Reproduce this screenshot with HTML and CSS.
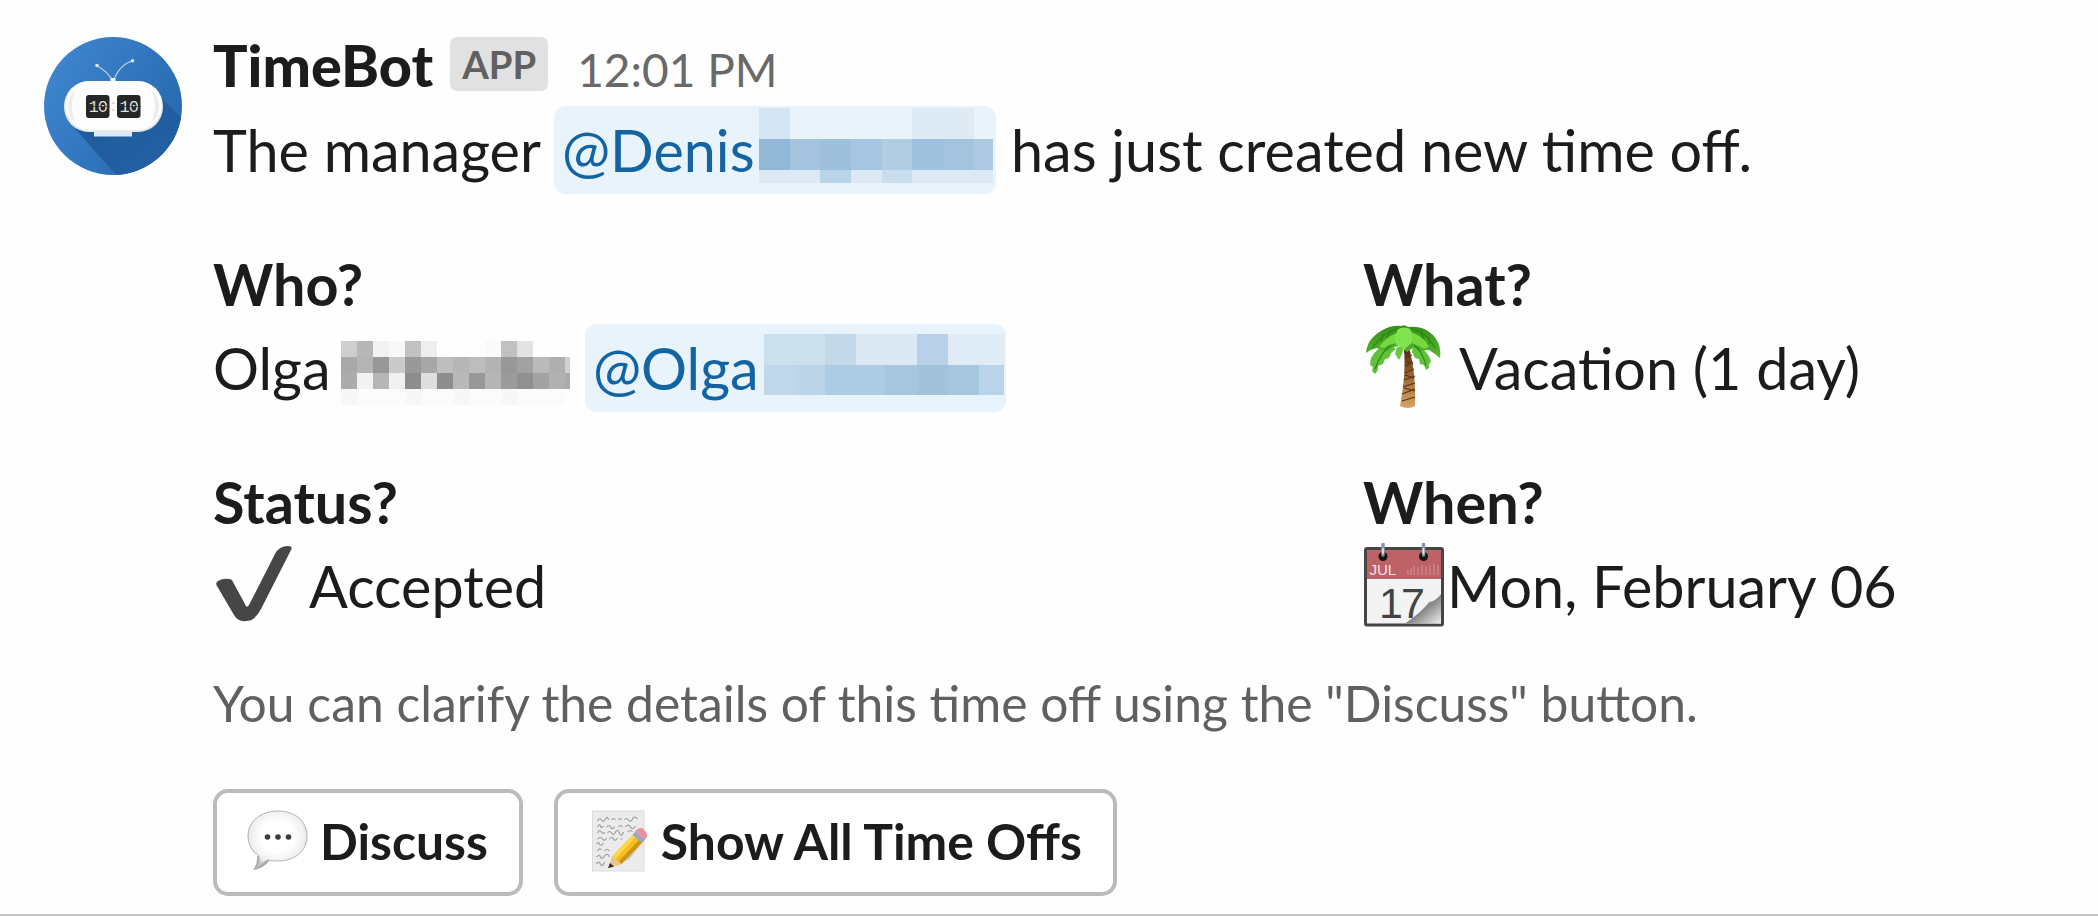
FILE: index.html
```html
<!DOCTYPE html>
<html lang="en">
<head>
  <meta charset="UTF-8" />
  <meta name="viewport" content="width=device-width, initial-scale=1.0"/>
  <title>TimeBot</title>
  <link rel="stylesheet" href="styles.css">
</head>
<body>
  <div class="message">
    <svg class="avatar" viewBox="0 0 138 138">
      <defs>
        <linearGradient id="sky" x1="0" y1="0.2" x2="1" y2="0.8">
          <stop offset="0" stop-color="#3f86d0"/>
          <stop offset="1" stop-color="#2467ac"/>
        </linearGradient>
        <linearGradient id="shade" x1="0" y1="0" x2="1" y2="1">
          <stop offset="0" stop-color="#1f5798"/>
          <stop offset="1" stop-color="#2363a6"/>
        </linearGradient>
        <clipPath id="disc"><circle cx="69" cy="69" r="69"/></clipPath>
      </defs>
      <circle cx="69" cy="69" r="69" fill="url(#sky)"/>
      <path d="M28 88L72 138H138V82L112 55Z" fill="url(#shade)" clip-path="url(#disc)"/>
      <path d="M53 29Q64 34 69 45Q75 28 88 24" fill="none" stroke="#b9d3ee" stroke-width="1.3"/>
      <circle cx="53" cy="28.500" r="1.800" fill="#dce9f6"/>
      <circle cx="88.500" cy="23.700" r="1.800" fill="#dce9f6"/>
      <rect x="66.500" y="41" width="5" height="4" fill="#eef3f8"/>
      <rect x="50" y="94" width="38" height="5.500" fill="#dfe9f5"/>
      <rect x="20" y="44" width="99" height="51" rx="25" fill="#e6e8eb"/>
      <rect x="21.500" y="44" width="96" height="49" rx="24" fill="#fdfdfd"/>
      <path d="M32 52Q24 60 24 69Q24 79 32 86Q28 78 28 69Q28 60 32 52ZM107 52Q115 60 115 69Q115 79 107 86Q111 78 111 69Q111 60 107 52Z" fill="#ececee"/>
      <rect x="42" y="58" width="23.500" height="23" rx="3" fill="#262626"/>
      <rect x="73" y="58" width="23.500" height="23" rx="3" fill="#262626"/>
      <text class="digits" x="53.800" y="75">10</text>
      <text class="digits" x="84.800" y="75">10</text>
      <path d="M42 69.500H65.500M73 69.500H96.500" stroke="#262626" stroke-width=".7"/>
      <path d="M68 66h2.500M68 73h2.500" stroke="#d8d8d8" stroke-width="2"/>
    </svg>

    <div class="content">
      <div class="header">
        <span class="name">TimeBot</span>
        <span class="badge">APP</span>
        <span class="time">12:01 PM</span>
      </div>

      <div class="line">
        <span class="intro">The manager</span>
        <span class="mention mention-denis"><span class="handle">@Denis</span>
          <svg class="redacted" width="234" height="75" viewBox="0 0 234 75" shape-rendering="crispEdges">
            <rect x="0" y="0" width="31" height="31" fill="#d5e5f1"/>
            <rect x="153" y="0" width="62" height="31" fill="#deebf5"/>
            <rect x="0" y="31" width="31" height="31" fill="#92b7d7"/>
            <rect x="31" y="31" width="61" height="31" fill="#a3c3df"/>
            <rect x="61" y="31" width="31" height="31" fill="#9fc0dc"/>
            <rect x="92" y="31" width="31" height="31" fill="#a6c5e0"/>
            <rect x="123" y="31" width="30" height="31" fill="#b1cde4"/>
            <rect x="153" y="31" width="31" height="31" fill="#9fc1dd"/>
            <rect x="184" y="31" width="31" height="31" fill="#a4c3de"/>
            <rect x="215" y="31" width="19" height="31" fill="#adcae2"/>
            <rect x="0" y="62" width="234" height="13" fill="#dce9f4"/>
            <rect x="61" y="62" width="31" height="13" fill="#b9d3e9"/>
            <rect x="123" y="62" width="30" height="13" fill="#c8dded"/>
          </svg>
        </span>
        <span class="outro">has just created new time off.</span>
      </div>

      <div class="fields">
        <div class="field">
          <div class="label">Who?</div>
          <div class="line">
            <span class="first-name">Olga</span>
            <svg class="redacted-name" width="229" height="64" viewBox="0 0 229 64" shape-rendering="crispEdges">
              <path d="M0 0h16v16H0z" fill="#cecece"/><path d="M16 0h16v16H16z" fill="#b7b7b7"/>
              <path d="M32 0h16v16H32z" fill="#f2f2f2"/><path d="M48 0h16v16H48z" fill="#f8f8f8"/>
              <path d="M64 0h16v16H64z" fill="#c2c2c2"/><path d="M80 0h16v16H80z" fill="#eee"/>
              <path d="M144 0h16v16h-16z" fill="#fafafa"/><path d="M160 0h16v16h-16z" fill="#c1c1c1"/>
              <path d="M176 0h16v16h-16z" fill="#e3e3e3"/>
              <path d="M0 16h16v16H0z" fill="#a9a9a9"/><path d="M16 16h16v16H16z" fill="#b5b5b5"/>
              <path d="M32 16h16v16H32z" fill="#989898"/><path d="M48 16h16v16H48z" fill="#cacaca"/>
              <path d="M64 16h16v16H64z" fill="#999"/><path d="M80 16h16v16H80z" fill="#a7a7a7"/>
              <path d="M96 16h16v16H96z" fill="#bebebe"/><path d="M112 16h16v16h-16z" fill="#b6b6b6"/>
              <path d="M128 16h16v16h-16z" fill="#bdbdbd"/><path d="M144 16h16v16h-16z" fill="#b3b3b3"/>
              <path d="M160 16h16v16h-16z" fill="#989898"/><path d="M176 16h16v16h-16z" fill="#a1a1a1"/>
              <path d="M192 16h16v16h-16z" fill="#bababa"/><path d="M208 16h16v16h-16z" fill="#afafaf"/>
              <path d="M224 16h5v16h-5z" fill="#d0d0d0"/>
              <path d="M0 32h16v16H0z" fill="#acacac"/><path d="M16 32h16v16H16z" fill="#f2f2f2"/>
              <path d="M32 32h16v16H32z" fill="#b6b6b6"/><path d="M48 32h16v16H48z" fill="#f1f1f1"/>
              <path d="M64 32h16v16H64z" fill="#8d8d8d"/><path d="M80 32h16v16H80z" fill="#dedede"/>
              <path d="M96 32h16v16H96z" fill="#8e8e8e"/><path d="M112 32h16v16h-16z" fill="#b9b9b9"/>
              <path d="M128 32h16v16h-16z" fill="#989898"/><path d="M144 32h16v16h-16z" fill="#b5b5b5"/>
              <path d="M160 32h16v16h-16z" fill="#9b9b9b"/><path d="M176 32h16v16h-16z" fill="#909090"/>
              <path d="M192 32h16v16h-16z" fill="#a2a2a2"/><path d="M208 32h16v16h-16z" fill="#b1b1b1"/>
              <path d="M224 32h5v16h-5z" fill="#aaa"/>
              <path d="M0 48h16v16H0zM64 48h16v16H64zM112 48h16v16h-16zM160 48h16v16h-16z" fill="#f7f7f7"/>
              <path d="M16 48h48v16H16zM80 48h32v16H80zM128 48h32v16h-32zM176 48h48v16h-48z" fill="#fbfbfb"/>
            </svg>
            <span class="mention mention-olga"><span class="handle">@Olga</span>
              <svg class="redacted" width="240" height="61" viewBox="0 0 240 61" shape-rendering="crispEdges">
                <rect x="0" y="0" width="61" height="31" fill="#ccdfed"/>
                <rect x="61" y="0" width="31" height="31" fill="#c3d9e8"/>
                <rect x="92" y="0" width="61" height="31" fill="#dce9f4"/>
                <rect x="153" y="0" width="31" height="31" fill="#b9d1e8"/>
                <rect x="184" y="0" width="56" height="31" fill="#dfecf5"/>
                <rect x="0" y="31" width="31" height="30" fill="#c0d7e9"/>
                <rect x="31" y="31" width="30" height="30" fill="#bbd4e8"/>
                <rect x="61" y="31" width="61" height="30" fill="#adcbe2"/>
                <rect x="122" y="31" width="31" height="30" fill="#a7c6de"/>
                <rect x="153" y="31" width="31" height="30" fill="#a2c2dc"/>
                <rect x="184" y="31" width="31" height="30" fill="#a6c6e0"/>
                <rect x="215" y="31" width="25" height="30" fill="#bbd3e8"/>
              </svg>
            </span>
          </div>
        </div>

        <div class="field">
          <div class="label">What?</div>
          <div class="line">
            <svg class="emoji" viewBox="0 0 84 84">
              <defs>
                <linearGradient id="trunk" x1="0" y1="0" x2="0" y2="1">
                  <stop offset="0" stop-color="#4a2a15"/>
                  <stop offset=".45" stop-color="#9a6431"/>
                  <stop offset="1" stop-color="#d6a566"/>
                </linearGradient>
                <linearGradient id="leaf" x1="0" y1="0" x2="0" y2="1">
                  <stop offset="0" stop-color="#34901a"/>
                  <stop offset="1" stop-color="#57b830"/>
                </linearGradient>
              </defs>
              <path d="M41 24Q44 21 47 26Q53 50 52 81Q45 85 37 81Q43 50 41 24Z" fill="url(#trunk)"/>
              <path d="M42 33l7-3M42 41l8-4M42 48l9-4M41 55l11 -4M40 62l12-4M39 69l13 -5M39 76l13-4M43 36l7 3M42 50l9 3M41 63l11 3" stroke="#5b3317" stroke-width="1.200"/>
              <!-- hanging fronds -->
              <path d="M26 18Q13 23 8 33L7 40L10 42L9 46L12 49L15 45L15 41L20 39L22 34L26 33L28 28L33 24Z" fill="#62c13a"/>
              <path d="M50 18Q62 23 67 33L68 37L66 39L66 43L63 45L61 40L57 39L56 34L52 33L49 27Z" fill="#62c13a"/>
              <path d="M34 22L32 29L36 35L39 29L41 22Z" fill="#6ac840"/>
              <!-- canopy -->
              <path d="M39 1Q27 0 18 6Q4 14 3 28Q8 24 14 23L24 27L30 22L37 21L44 27L51 22L56 26L66 25L72 29L77 33Q79 20 70 10Q60 0 45 2Q41-1 39 1Z" fill="url(#leaf)"/>
              <path d="M36 7Q22 12 16 22L21 23L26 20L33 18ZM48 7Q62 12 66 22L61 24L56 21L50 19Z" fill="#74d83e"/>
              <path d="M35 4Q30 13 33 20L38 22L41 25L45 21L49 18Q51 11 47 4Q42 1 35 4Z" fill="#80e24e"/>
              <path d="M36 3Q20 8 9 23M47 3Q62 6 72 23M28 20Q18 27 12 44M51 20Q60 27 63 41M27 5L24 13M20 9L18 16M58 6L60 14M66 12L66 19" fill="none" stroke="#2c8513" stroke-width="1.100"/>
            </svg>
            <span class="value">Vacation (1 day)</span>
          </div>
        </div>

        <div class="field">
          <div class="label">Status?</div>
          <div class="line">
            <svg class="emoji" viewBox="0 0 84 84">
              <path d="M4 43Q2 40 5 38Q10 35 16 36Q19 36 20 39L33 63Q34 65 36 62L62 11Q66 3 75 3Q80 3 78 7L48 66Q42 78 33 78Q25 79 21 72Z" fill="#464646"/>
            </svg>
            <span class="value">Accepted</span>
          </div>
        </div>

        <div class="field">
          <div class="label">When?</div>
          <div class="line">
            <svg class="emoji" viewBox="0 0 84 84">
              <defs>
                <linearGradient id="curl" x1="0" y1="0" x2="1" y2="1">
                  <stop offset="0" stop-color="#fff"/>
                  <stop offset=".35" stop-color="#d6d6d6"/>
                  <stop offset=".52" stop-color="#858585"/>
                  <stop offset="1" stop-color="#f0f0f0"/>
                </linearGradient>
              </defs>
              <rect x="2.500" y="5.500" width="77" height="76.500" rx="1.500" fill="#f3f3f3" stroke="#454545" stroke-width="3"/>
              <rect x="4" y="7" width="74" height="29" fill="#bd6266"/>
              <path d="M45 32V27M48 32V25M51 32V23M55 32V24M59 32V22M63 32V23M67 32V22M71 32V21M75 32V22" stroke="#ce8a8d" stroke-width="1.300"/>
              <text class="cal-month" x="6.500" y="32">JUL</text>
              <text class="cal-day" x="16" y="74.500">17</text>
              <path d="M78 51Q73 58 66 59Q59 69 42 80.500H78Z" fill="url(#curl)"/>
              <circle cx="20" cy="13.500" r="4.500" fill="#151515"/>
              <circle cx="60.500" cy="13.500" r="4.500" fill="#151515"/>
              <path d="M20 1V12M60.500 1V12" stroke="#8996a3" stroke-width="3.400" stroke-linecap="round"/>
              <path d="M20 5V11M60.500 5V11" stroke="#e3e9ee" stroke-width="1.600"/>
            </svg>
            <span class="value date">Mon, February 06</span>
          </div>
        </div>
      </div>

      <div class="context">You can clarify the details of this time off using the "Discuss" button.</div>

      <div class="actions">
        <button class="btn">
          <svg class="btn-icon" viewBox="0 0 62 62">
            <defs>
              <radialGradient id="bubble" cx=".5" cy=".45" r=".55">
                <stop offset=".5" stop-color="#fff"/>
                <stop offset=".85" stop-color="#eee"/>
                <stop offset="1" stop-color="#c4c4c4"/>
              </radialGradient>
            </defs>
            <path d="M10 46Q11 54 6 60Q16 59 23 50Z" fill="#a8a8a8"/>
            <path d="M31 1C48 1 60 11 60 26S48 51 31 51Q25 51 20 50Q15 55 9 58Q13 52 12 46Q1 39 1 26C1 11 14 1 31 1Z" fill="url(#bubble)" stroke="#b5b5b5" stroke-width="1"/>
            <circle cx="20.500" cy="27" r="2.800" fill="#3c3c3c"/>
            <circle cx="31" cy="27" r="2.800" fill="#3c3c3c"/>
            <circle cx="41.500" cy="27" r="2.800" fill="#3c3c3c"/>
          </svg>
          <span>Discuss</span>
        </button>
        <button class="btn">
          <svg class="btn-icon" viewBox="-2.500 0 62 62">
            <rect x="2" y="1" width="51.500" height="60" fill="#ebebeb" stroke="#dcdcdc"/>
            <path d="M7 11q2-4 4-1t4-1 3 1M21 10q2-3 4 0M28 10q2-3 3 0M34 10q2-3 4 0t4-1 5 0M7 17q2-4 3-1t3 0M16 17q3-3 4 0t4 0M28 17q2-3 4 0M35 17q3-4 5 0t5-1M7 23q2-4 4-1t3 0M17 23q2-3 4 0t4-1 4 1 4-1M37 22q3-3 5 0M7 29q3-3 5 0t4-1M19 29q3-3 4 0t4-1M30 29h2M6 34q2-3 3 0t4-1M7 41q2-4 4-1M14 41q3-3 5 0M6 47q3-3 4 0t4-1 5 1M6 54q2-4 4 0t4-2" fill="none" stroke="#999" stroke-width="1.100"/>
            <path d="M20 58L39 49L56 27L53 25Z" fill="#c2c2c2"/>
            <path d="M22 46L43 24L52 32L31 54L18 58Z" fill="#f5bd20"/>
            <path d="M22 46L43 24L46 26L25 49Z" fill="#ffd64a"/>
            <path d="M28 51.500L49 29.500L52 32L31 54Z" fill="#cf940f"/>
            <path d="M22 46L31 54L18 58Z" fill="#ebc78e"/>
            <path d="M19.500 53L23.500 56.500L17.500 58Z" fill="#2c2c2c"/>
            <path d="M42 25L45 21L54.500 29.500L51.500 33Z" fill="#9aa9bb"/>
            <path d="M45 21Q49 16 53 19L56 23Q58 26 54.500 29.500Z" fill="#ee8f9b"/>
          </svg>
          <span>Show All Time Offs</span>
        </button>
      </div>
    </div>
  </div>
</body>
</html>
```

FILE: styles.css
```css
* {
  box-sizing: border-box;
}
body {
  margin: 0;
  height: 916px;
  overflow: hidden;
  background: #fefefe;
  border-bottom: 2px solid #c4c4c4;
  color: #1d1c1d;
  font-family: Lato, "Liberation Sans", sans-serif;
  font-size: 57.5px;
  line-height: 84px;
}
.message {
  display: flex;
  gap: 31px;
  padding: 23px 44px 0;
}
.avatar {
  flex: none;
  width: 138px;
  height: 138px;
  margin-top: 14px;
}
.digits {
  font: 17px "Liberation Mono", monospace;
  letter-spacing: -1px;
  fill: #dedede;
  text-anchor: middle;
}
.content {
  flex: 1;
  white-space: nowrap;
}
.header {
  display: flex;
  align-items: baseline;
  height: 85px;
}
.name {
  font-weight: 900;
}
.badge {
  align-self: flex-start;
  margin: 14px 0 0 17px;
  padding: 1px 12px 0;
  border-radius: 7px;
  background: #e1e1e1;
  color: #616061;
  font-size: 38.3px;
  font-weight: 700;
  line-height: 53px;
}
.time {
  margin-left: 29px;
  color: #696969;
  font-size: 46px;
}
.line {
  display: flex;
  align-items: center;
  height: 84px;
}
.mention {
  display: flex;
  align-items: center;
  flex: none;
  height: 88px;
  padding-left: 8px;
  border-radius: 12px;
  background: #e8f3fb;
  color: #1264a3;
}
.mention-denis {
  width: 442px;
}
.mention-olga {
  width: 421px;
}
.intro {
  width: 341px;
}
.outro {
  margin-left: 15px;
}
.handle {
  flex: none;
  width: 197px;
}
.redacted {
  flex: none;
  align-self: flex-start;
  margin-top: 2px;
}
.mention-olga .handle {
  width: 171px;
}
.mention-olga .redacted {
  margin-top: 10px;
}
.first-name {
  width: 128px;
}
.redacted-name {
  flex: none;
  margin: 10px 15px 0 0;
}
.fields {
  display: grid;
  grid-template-columns: 1150px 1fr;
  row-gap: 50px;
  margin-top: 50px;
}
.label {
  font-weight: 700;
}
.emoji {
  flex: none;
  width: 84px;
  height: 84px;
  margin-bottom: 2px;
}
.value {
  margin-left: 12px;
}
.date {
  margin-left: 0;
}
.cal-month {
  font: 15px "Liberation Sans", sans-serif;
  fill: #f6e4e4;
}
.cal-day {
  font: 43px "Liberation Sans", sans-serif;
  letter-spacing: -2px;
  fill: #444;
}
.context {
  margin-top: 43px;
  color: #616061;
  font-size: 49.8px;
  line-height: 64px;
}
.actions {
  display: flex;
  gap: 31px;
  margin-top: 54px;
}
.btn {
  display: flex;
  align-items: center;
  height: 107px;
  padding: 0 31px 3px 30px;
  border: 4px solid #bbb;
  border-radius: 15px;
  background: #fff;
  color: #1d1c1d;
  font-family: inherit;
  font-size: 49.8px;
  font-weight: 700;
}
.btn-icon {
  width: 62px;
  height: 62px;
  margin-right: 11px;
}
```
